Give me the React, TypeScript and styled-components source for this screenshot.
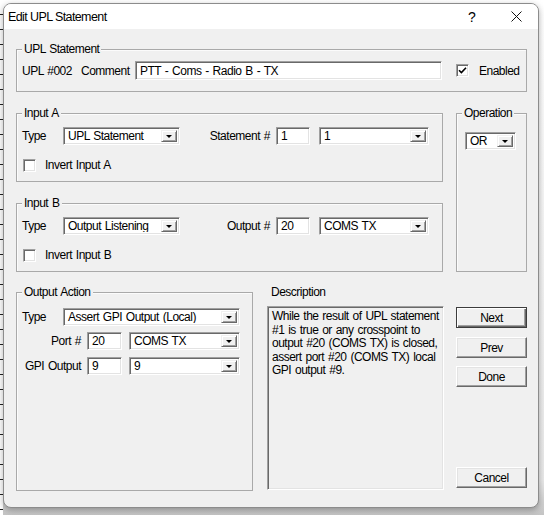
import React from 'react';
import styled, { createGlobalStyle, css } from 'styled-components';

// --- Estilos globales ---
const GlobalStyle = createGlobalStyle`
  html, body {
    margin: 0;
    padding: 0;
  }
  body {
    font-family: 'Liberation Sans', Arial, sans-serif;
    font-size: 12px;
    color: #000;
  }
`;

// --- Fondo de la captura (regla a la izquierda, gris abajo) ---
const Page = styled.div`
  width: 544px;
  height: 515px;
  display: flex;
  padding-top: 3px;
  box-sizing: border-box;
  background: linear-gradient(to bottom, #ffffff 0, #e9e9e9 480px, #c9c9c9 510px, #c4c4c4 515px);
  overflow: hidden;
`;

const Ruler = styled.div`
  width: 3px;
  flex-shrink: 0;
  margin-top: -3px;
  background: repeating-linear-gradient(to bottom, #fff 0 14px, #222 14px 15px);
`;

// --- Ventana ---
const Window = styled.div`
  width: 536px;
  height: 505px;
  box-sizing: border-box;
  border: 1px solid #8c8c8c;
  border-radius: 8px;
  overflow: hidden;
  display: flex;
  flex-direction: column;
  box-shadow: 0 2px 6px rgba(0, 0, 0, 0.3);
  background: #f0f0f0;
`;

const TitleBar = styled.div`
  height: 25px;
  flex-shrink: 0;
  background: #fff;
  display: flex;
  align-items: center;
  padding-left: 4px;
`;

const Title = styled.div`
  font-size: 12.5px;
  letter-spacing: -0.6px;
  flex: 1;
`;

const TitleButton = styled.div`
  width: 44px;
  height: 25px;
  display: flex;
  align-items: center;
  justify-content: center;
  font-size: 14px;
`;

const Body = styled.div`
  flex: 1;
  display: flex;
  flex-direction: column;
  padding: 20px 11px 0 12px;
  letter-spacing: -0.5px;
  word-spacing: 1px;
`;

// --- Grupo (caja con etiqueta) ---
const Group = styled.div<{ $w?: number; $h: number; $pad?: string }>`
  position: relative;
  box-sizing: border-box;
  ${p => (p.$w ? `width: ${p.$w}px;` : '')}
  height: ${p => p.$h}px;
  border: 1px solid #a9a9a9;
  box-shadow: inset 1px 1px 0 #fbfbfb;
  padding: ${p => p.$pad ?? '0'};
  flex-shrink: 0;
`;

const Legend = styled.span`
  position: absolute;
  top: -8px;
  left: 5px;
  padding: 0 2px;
  line-height: 14px;
  background: #f0f0f0;
`;

const Row = styled.div<{ $mt?: number }>`
  display: flex;
  align-items: center;
  margin-top: ${p => p.$mt ?? 0}px;
`;

const Label = styled.span<{ $w?: number; $right?: boolean; $flex?: boolean }>`
  ${p => (p.$w ? `width: ${p.$w}px;` : '')}
  ${p => (p.$flex ? 'flex: 1;' : '')}
  flex-shrink: 0;
  white-space: nowrap;
  ${p => (p.$right ? 'text-align: right; padding-right: 6px; box-sizing: border-box;' : '')}
`;

// --- Campos hundidos ---
const sunken = css`
  box-sizing: border-box;
  border: 1px solid;
  border-color: #a0a0a0 #ffffff #ffffff #a0a0a0;
  box-shadow: inset 1px 1px 0 #696969, inset -1px -1px 0 #e3e3e3;
`;

const TextBox = styled.div<{ $w: number; $h?: number; $ml?: number }>`
  ${sunken};
  width: ${p => p.$w}px;
  height: ${p => p.$h ?? 18}px;
  margin-left: ${p => p.$ml ?? 0}px;
  background: #fff;
  padding-left: 4px;
  display: flex;
  align-items: center;
  flex-shrink: 0;
  white-space: nowrap;
`;

const SelectBox = styled.div<{ $w: number; $ml?: number }>`
  ${sunken};
  width: ${p => p.$w}px;
  height: 18px;
  margin-left: ${p => p.$ml ?? 0}px;
  background: #fff;
  display: flex;
  align-items: stretch;
  flex-shrink: 0;
  padding: 2px;
`;

const SelectValue = styled.span`
  flex: 1;
  display: flex;
  align-items: center;
  padding-left: 2px;
  white-space: nowrap;
  overflow: hidden;
`;

const ArrowButton = styled.span`
  width: 16px;
  box-sizing: border-box;
  background: #f0f0f0;
  border: 1px solid;
  border-color: #f0f0f0 #696969 #696969 #f0f0f0;
  box-shadow: inset 1px 1px 0 #fff, inset -1px -1px 0 #a0a0a0;
  display: flex;
  align-items: center;
  justify-content: center;
  &::after {
    content: '';
    border-left: 3px solid transparent;
    border-right: 3px solid transparent;
    border-top: 3px solid #000;
    margin-top: 1px;
  }
`;

const CheckBox = styled.span<{ $ml?: number }>`
  ${sunken};
  width: 13px;
  height: 13px;
  background: #fff;
  flex-shrink: 0;
  margin-left: ${p => p.$ml ?? 0}px;
  display: flex;
  align-items: center;
  justify-content: center;
`;

// --- Columnas ---
const MiddleRow = styled.div`
  display: flex;
  gap: 13px;
  margin-top: 21px;
`;

const Column = styled.div`
  display: flex;
  flex-direction: column;
  gap: 21px;
`;

const BottomRow = styled.div`
  display: flex;
  margin-top: 20px;
`;

const DescColumn = styled.div`
  width: 177px;
  margin-left: 14px;
  display: flex;
  flex-direction: column;
`;

const DescLabel = styled.div`
  line-height: 14px;
  margin: -7px 0 7px 4px;
`;

const DescBox = styled.div`
  ${sunken};
  height: 184px;
  background: #f0f0f0;
  padding: 3px 4px;
  line-height: 13.5px;
  white-space: nowrap;
`;

const ButtonColumn = styled.div`
  width: 71px;
  margin-left: 12px;
  display: flex;
  flex-direction: column;
  padding-top: 15px;
  padding-bottom: 3px;
`;

const Button = styled.div<{ $default?: boolean; $mt?: number | 'auto' }>`
  height: 21px;
  box-sizing: border-box;
  background: #f0f0f0;
  display: flex;
  align-items: center;
  justify-content: center;
  margin-top: ${p => (p.$mt === 'auto' ? 'auto' : `${p.$mt ?? 0}px`)};
  border: 1px solid;
  border-color: #fff #696969 #696969 #fff;
  box-shadow: inset -1px -1px 0 #a0a0a0, inset 1px 1px 0 #e3e3e3;
  ${p =>
    p.$default &&
    css`
      border-color: #3c3c3c;
      box-shadow: inset 1px 1px 0 #fff, inset -1px -1px 0 #696969, inset -2px -2px 0 #a0a0a0;
    `}
`;

const Select = ({ w, ml, value }: { w: number; ml?: number; value: string }) => (
  <SelectBox $w={w} $ml={ml}>
    <SelectValue>{value}</SelectValue>
    <ArrowButton />
  </SelectBox>
);

const Check = () => (
  <svg width="9" height="9" viewBox="0 0 9 9">
    <path d="M1 4.2 L3.4 6.6 L8 1.8" fill="none" stroke="#000" strokeWidth="1.6" />
  </svg>
);

const App: React.FC = () => {
  return (
    <>
      <GlobalStyle />
      <Page>
        <Ruler />
        <Window>
          <TitleBar>
            <Title>Edit UPL Statement</Title>
            <TitleButton>?</TitleButton>
            <TitleButton>
              <svg width="11" height="11" viewBox="0 0 11 11">
                <path d="M0.5 0.5 L10.5 10.5 M10.5 0.5 L0.5 10.5" stroke="#111" strokeWidth="1" />
              </svg>
            </TitleButton>
          </TitleBar>

          <Body>
            {/* UPL Statement */}
            <Group $h={43} $pad="0 0 0 5px" style={{ display: 'flex', alignItems: 'center' }}>
              <Legend>UPL Statement</Legend>
              <Label $w={59}>UPL #002</Label>
              <Label $w={54}>Comment</Label>
              <TextBox $w={307} $h={19}>PTT - Coms - Radio B - TX</TextBox>
              <CheckBox $ml={14}>
                <Check />
              </CheckBox>
              <Label style={{ marginLeft: 10 }}>Enabled</Label>
            </Group>

            <MiddleRow>
              <Column>
                <Group $w={427} $h={69} $pad="13px 13px 0 5px">
                  <Legend>Input A</Legend>
                  <Row>
                    <Label $w={41}>Type</Label>
                    <Select w={117} value="UPL Statement" />
                    <Label $flex $right>Statement #</Label>
                    <TextBox $w={34}>1</TextBox>
                    <Select w={110} ml={9} value="1" />
                  </Row>
                  <Row $mt={13}>
                    <CheckBox $ml={1} />
                    <Label style={{ marginLeft: 9 }}>Invert Input A</Label>
                  </Row>
                </Group>
                <Group $w={427} $h={69} $pad="13px 13px 0 5px">
                  <Legend>Input B</Legend>
                  <Row>
                    <Label $w={41}>Type</Label>
                    <Select w={117} value="Output Listening" />
                    <Label $flex $right>Output #</Label>
                    <TextBox $w={34}>20</TextBox>
                    <Select w={110} ml={9} value="COMS TX" />
                  </Row>
                  <Row $mt={13}>
                    <CheckBox $ml={1} />
                    <Label style={{ marginLeft: 9 }}>Invert Input B</Label>
                  </Row>
                </Group>
              </Column>
              <Group $w={71} $h={159} $pad="18px 0 0 8px">
                <Legend>Operation</Legend>
                <Select w={51} value="OR" />
              </Group>
            </MiddleRow>

            <BottomRow>
              <Group $w={237} $h={199} $pad="15px 0 0 5px">
                <Legend>Output Action</Legend>
                <Row>
                  <Label $w={41}>Type</Label>
                  <Select w={177} value="Assert GPI Output (Local)" />
                </Row>
                <Row $mt={6}>
                  <Label $w={65} $right>Port #</Label>
                  <TextBox $w={35}>20</TextBox>
                  <Select w={111} ml={7} value="COMS TX" />
                </Row>
                <Row $mt={7}>
                  <Label $w={65} $right>GPI Output</Label>
                  <TextBox $w={35}>9</TextBox>
                  <Select w={111} ml={7} value="9" />
                </Row>
              </Group>

              <DescColumn>
                <DescLabel>Description</DescLabel>
                <DescBox>
                  While the result of UPL statement
                  <br />
                  #1 is true or any crosspoint to
                  <br />
                  output #20 (COMS TX) is closed,
                  <br />
                  assert port #20 (COMS TX) local
                  <br />
                  GPI output #9.
                </DescBox>
              </DescColumn>

              <ButtonColumn>
                <Button $default>Next</Button>
                <Button $mt={9}>Prev</Button>
                <Button $mt={8}>Done</Button>
                <Button $mt="auto">Cancel</Button>
              </ButtonColumn>
            </BottomRow>
          </Body>
        </Window>
      </Page>
    </>
  );
};

export default App;
